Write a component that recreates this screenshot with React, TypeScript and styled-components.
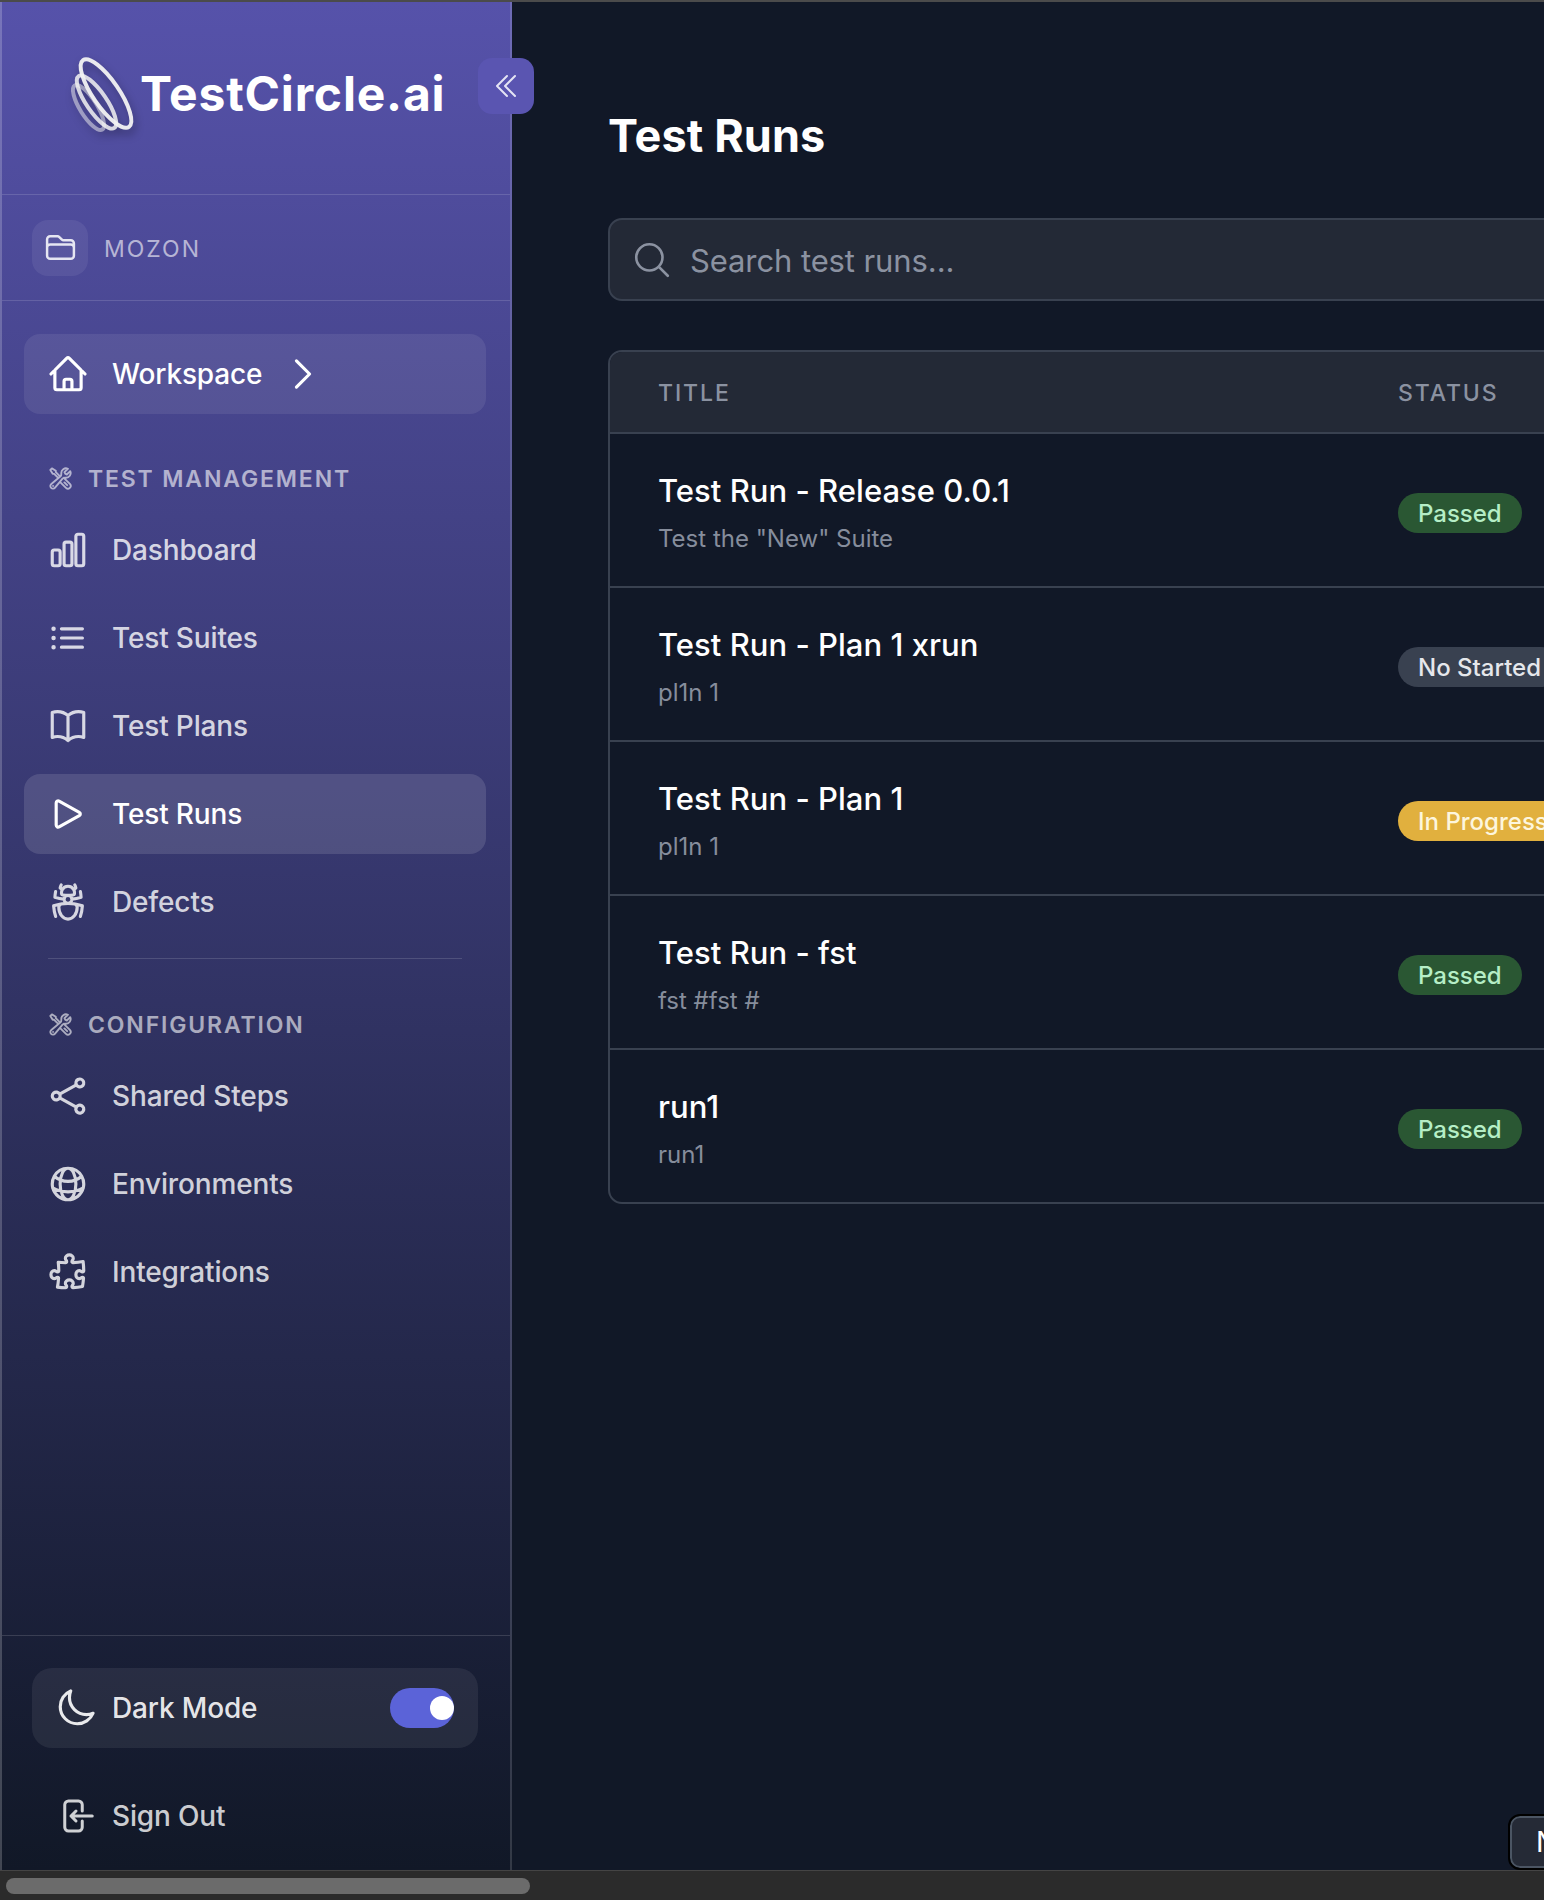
import React from 'react';
import styled, { createGlobalStyle } from 'styled-components';
import {
  HiOutlineArrowLeftOnRectangle,
  HiOutlineBookOpen,
  HiOutlineBugAnt,
  HiOutlineChartBar,
  HiOutlineChevronDoubleLeft,
  HiOutlineChevronRight,
  HiOutlineFolder,
  HiOutlineGlobeAlt,
  HiOutlineHome,
  HiOutlineListBullet,
  HiOutlineMagnifyingGlass,
  HiOutlineMoon,
  HiOutlinePlay,
  HiOutlinePuzzlePiece,
  HiOutlineShare,
  HiOutlineWrenchScrewdriver,
} from 'react-icons/hi2';

const GlobalStyle = createGlobalStyle`
  html, body {
    margin: 0;
    padding: 0;
    background: #111827;
  }
  * {
    box-sizing: border-box;
  }
`;

const Frame = styled.div`
  width: 1544px;
  height: 1900px;
  display: flex;
  flex-direction: column;
  overflow: hidden;
  position: relative;
  font-family: Inter, "Liberation Sans", sans-serif;
  background: #111827;
  border-top: 2px solid #4b4b4b;
`;

const Body = styled.div`
  flex: 1;
  min-height: 0;
  display: flex;
`;

const Sidebar = styled.aside`
  width: 512px;
  flex: none;
  display: flex;
  flex-direction: column;
  background: linear-gradient(180deg, #5652aa 0%, #111827 100%);
  border-left: 2px solid rgba(255, 255, 255, 0.2);
  border-right: 2px solid rgba(255, 255, 255, 0.14);

  svg {
    stroke-width: 1.8;
  }
`;

const Brand = styled.div`
  height: 193px;
  flex: none;
  display: flex;
  align-items: center;
  padding: 0 0 10px 66px;
  gap: 2px;
  border-bottom: 1px solid rgba(255, 255, 255, 0.14);
`;

const LogoMark = styled.svg`
  width: 70px;
  height: 84px;
  flex: none;
  margin-top: 6px;
  filter: drop-shadow(2px 5px 4px rgba(0, 0, 0, 0.35));
`;

const BrandName = styled.span`
  font-size: 48px;
  font-weight: 700;
  letter-spacing: 0.8px;
  color: #fff;
`;

const Project = styled.div`
  height: 106px;
  flex: none;
  display: flex;
  align-items: center;
  gap: 16px;
  padding: 0 30px;
  border-bottom: 1px solid rgba(255, 255, 255, 0.14);
`;

const ProjectIcon = styled.div`
  width: 56px;
  height: 56px;
  display: flex;
  align-items: center;
  justify-content: center;
  border-radius: 16px;
  background: rgba(255, 255, 255, 0.07);
  color: #e6e6f2;
  font-size: 33px;
`;

const ProjectName = styled.span`
  font-size: 23px;
  letter-spacing: 2px;
  padding-top: 2px;
  color: rgba(255, 255, 255, 0.6);
`;

const Nav = styled.nav`
  flex: 1;
  display: flex;
  flex-direction: column;
  padding: 33px 24px 0 22px;
`;

const NavItem = styled.div<{ $active?: boolean; $card?: boolean }>`
  height: 80px;
  flex: none;
  display: flex;
  align-items: center;
  gap: 23px;
  padding-left: 23px;
  margin-bottom: 8px;
  border-radius: 16px;
  font-size: 28px;
  font-weight: 450;
  letter-spacing: -0.15px;
  color: ${(p) => (p.$active || p.$card ? '#fff' : 'rgba(255, 255, 255, 0.8)')};
  background: ${(p) => (p.$active ? 'rgba(255, 255, 255, 0.12)' : p.$card ? 'rgba(255, 255, 255, 0.08)' : 'transparent')};

  > svg:first-child {
    font-size: 42px;
    flex: none;
  }
`;

const NavChevron = styled(HiOutlineChevronRight)`
  font-size: 42px;
  margin-left: -3px;
`;

const SectionHeading = styled.div`
  height: 34px;
  margin: 39px 0 15px;
  padding-left: 24px;
  display: flex;
  align-items: center;
  gap: 15px;
  font-size: 23px;
  font-weight: 600;
  letter-spacing: 1.85px;
  color: rgba(255, 255, 255, 0.6);

  > span {
    padding-top: 2px;
  }

  > svg {
    font-size: 25px;
  }
`;

const Divider = styled.div`
  height: 1px;
  flex: none;
  margin: 8px 24px 9px;
  background: rgba(255, 255, 255, 0.14);
`;

const SidebarFooter = styled.div`
  flex: none;
  display: flex;
  flex-direction: column;
  padding: 32px 32px 14px 30px;
  gap: 28px;
  border-top: 1px solid rgba(255, 255, 255, 0.14);
`;

const ModeRow = styled.div`
  height: 80px;
  display: flex;
  align-items: center;
  padding: 0 24px 0 23px;
  border-radius: 20px;
  background: rgba(255, 255, 255, 0.07);
  font-size: 28px;
  font-weight: 450;
  letter-spacing: -0.15px;
  color: rgba(255, 255, 255, 0.9);

  > svg {
    font-size: 42px;
    margin-right: 15px;
  }
`;

const Toggle = styled.div`
  margin-left: auto;
  width: 64px;
  height: 40px;
  display: flex;
  align-items: center;
  justify-content: flex-end;
  border-radius: 20px;
  background: #5b63d8;
`;

const ToggleKnob = styled.div`
  width: 24px;
  height: 24px;
  border-radius: 50%;
  background: #fff;
`;

const SignOut = styled.div`
  height: 80px;
  display: flex;
  align-items: center;
  padding-left: 24px;
  gap: 16px;
  font-size: 28px;
  font-weight: 450;
  letter-spacing: -0.15px;
  color: rgba(255, 255, 255, 0.8);

  > svg {
    font-size: 40px;
  }
`;

const CollapseButton = styled.button`
  position: absolute;
  left: 478px;
  top: 56px;
  width: 56px;
  height: 56px;
  padding: 0;
  border: none;
  border-radius: 14px;
  display: flex;
  align-items: center;
  justify-content: center;
  background: #5a55b1;
  color: #e4e4f4;
  font-size: 32px;
`;

const Main = styled.main`
  flex: 1;
  min-width: 0;
  overflow: hidden;
  padding: 0 0 0 96px;
  background: #111827;
`;

const Title = styled.h1`
  margin: 0;
  padding-top: 109px;
  height: 216px;
  font-size: 45px;
  line-height: 50px;
  font-weight: 700;
  letter-spacing: 0.1px;
  color: #fff;
`;

const Search = styled.div`
  width: 1500px;
  height: 83px;
  display: flex;
  align-items: center;
  gap: 17px;
  padding-left: 21px;
  background: #232936;
  border: 2px solid #394150;
  border-radius: 14px;
  color: #8b92a1;

  > svg {
    font-size: 42px;
    flex: none;
  }
`;

const SearchText = styled.span`
  font-size: 31px;
  padding-top: 2px;
  letter-spacing: -0.1px;
`;

const Table = styled.div`
  width: 1500px;
  margin-top: 49px;
  border: 2px solid #394150;
  border-radius: 14px;
  overflow: hidden;
`;

const HeadRow = styled.div`
  height: 80px;
  display: grid;
  grid-template-columns: 740px 1fr;
  align-items: center;
  padding: 2px 0 0 48px;
  background: #232936;
  font-size: 23px;
  font-weight: 500;
  letter-spacing: 1.9px;
  color: #8b92a1;
`;

const Row = styled.div`
  height: 154px;
  display: grid;
  grid-template-columns: 740px 1fr;
  align-items: center;
  padding-left: 48px;
  border-top: 2px solid #394150;
`;

const RowText = styled.div`
  padding-top: 6px;
`;

const RowTitle = styled.div`
  font-size: 31px;
  font-weight: 500;
  line-height: 44px;
  letter-spacing: 0.03px;
  color: #fff;
`;

const RowSub = styled.div`
  margin-top: 8px;
  font-size: 24px;
  line-height: 36px;
  color: #868d9c;
`;

const badgeColors = {
  passed: { bg: '#2a5733', fg: '#b5eec6' },
  idle: { bg: '#394150', fg: '#e5e7eb' },
  progress: { bg: '#e1b03e', fg: '#fdf6dd' },
};

const Badge = styled.span<{ $kind: keyof typeof badgeColors }>`
  justify-self: start;
  margin-top: 6px;
  height: 40px;
  display: inline-flex;
  align-items: center;
  padding: 0 20px;
  border-radius: 20px;
  font-size: 24px;
  font-weight: 450;
  white-space: nowrap;
  background: ${(p) => badgeColors[p.$kind].bg};
  color: ${(p) => badgeColors[p.$kind].fg};
`;

const ScrollTrack = styled.div`
  height: 30px;
  flex: none;
  padding: 7px 0 0 6px;
  background: #2b2b2b;
  border-top: 1px solid #444;
`;

const ScrollThumb = styled.div`
  width: 524px;
  height: 16px;
  border-radius: 8px;
  background: #6b6b6b;
`;

const FloatingButton = styled.div`
  position: absolute;
  left: 1510px;
  top: 1814px;
  width: 120px;
  height: 52px;
  padding-left: 24px;
  display: flex;
  align-items: center;
  border: 2px solid #4b5563;
  border-radius: 10px;
  outline: 2px solid #000;
  background: #252a36;
  font-size: 28px;
  color: #fff;
`;

const tools = [
  { label: 'Dashboard', icon: HiOutlineChartBar },
  { label: 'Test Suites', icon: HiOutlineListBullet },
  { label: 'Test Plans', icon: HiOutlineBookOpen },
  { label: 'Test Runs', icon: HiOutlinePlay, active: true },
  { label: 'Defects', icon: HiOutlineBugAnt },
];

const config = [
  { label: 'Shared Steps', icon: HiOutlineShare },
  { label: 'Environments', icon: HiOutlineGlobeAlt },
  { label: 'Integrations', icon: HiOutlinePuzzlePiece },
];

const runs: { title: string; sub: string; status: string; kind: keyof typeof badgeColors }[] = [
  { title: 'Test Run - Release 0.0.1', sub: 'Test the "New" Suite', status: 'Passed', kind: 'passed' },
  { title: 'Test Run - Plan 1 xrun', sub: 'pl1n 1', status: 'No Started', kind: 'idle' },
  { title: 'Test Run - Plan 1', sub: 'pl1n 1', status: 'In Progress', kind: 'progress' },
  { title: 'Test Run - fst', sub: 'fst #fst #', status: 'Passed', kind: 'passed' },
  { title: 'run1', sub: 'run1', status: 'Passed', kind: 'passed' },
];

const App = () => {
  return (
    <Frame>
      <GlobalStyle />
      <Body>
        <Sidebar>
          <Brand>
            <LogoMark viewBox="0 0 70 84" fill="none" stroke="#f2f2f2" style={{ strokeWidth: 4 }}>
              <ellipse cx="20.5" cy="53.5" rx="8.5" ry="26" transform="rotate(-32 20.5 53.5)" opacity="0.5" />
              <ellipse cx="28.5" cy="48" rx="10" ry="31.5" transform="rotate(-34.5 28.5 48)" opacity="0.85" />
              <ellipse cx="38" cy="39.5" rx="13" ry="40.5" transform="rotate(-34.5 38 39.5)" opacity="0.95" />
            </LogoMark>
            <BrandName>TestCircle.ai</BrandName>
          </Brand>
          <Project>
            <ProjectIcon>
              <HiOutlineFolder />
            </ProjectIcon>
            <ProjectName>MOZON</ProjectName>
          </Project>
          <Nav>
            <NavItem $card>
              <HiOutlineHome />
              Workspace
              <NavChevron />
            </NavItem>
            <SectionHeading>
              <HiOutlineWrenchScrewdriver />
              <span>TEST MANAGEMENT</span>
            </SectionHeading>
            {tools.map((t) => (
              <NavItem key={t.label} $active={t.active}>
                <t.icon />
                {t.label}
              </NavItem>
            ))}
            <Divider />
            <SectionHeading>
              <HiOutlineWrenchScrewdriver />
              <span>CONFIGURATION</span>
            </SectionHeading>
            {config.map((t) => (
              <NavItem key={t.label}>
                <t.icon />
                {t.label}
              </NavItem>
            ))}
          </Nav>
          <SidebarFooter>
            <ModeRow>
              <HiOutlineMoon />
              Dark Mode
              <Toggle>
                <ToggleKnob />
              </Toggle>
            </ModeRow>
            <SignOut>
              <HiOutlineArrowLeftOnRectangle />
              Sign Out
            </SignOut>
          </SidebarFooter>
        </Sidebar>
        <Main>
          <Title>Test Runs</Title>
          <Search>
            <HiOutlineMagnifyingGlass />
            <SearchText>Search test runs...</SearchText>
          </Search>
          <Table>
            <HeadRow>
              <span>TITLE</span>
              <span>STATUS</span>
            </HeadRow>
            {runs.map((r) => (
              <Row key={r.title}>
                <RowText>
                  <RowTitle>{r.title}</RowTitle>
                  <RowSub>{r.sub}</RowSub>
                </RowText>
                <Badge $kind={r.kind}>{r.status}</Badge>
              </Row>
            ))}
          </Table>
        </Main>
      </Body>
      <ScrollTrack>
        <ScrollThumb />
      </ScrollTrack>
      <CollapseButton>
        <HiOutlineChevronDoubleLeft />
      </CollapseButton>
      <FloatingButton>N</FloatingButton>
    </Frame>
  );
};

export default App;
